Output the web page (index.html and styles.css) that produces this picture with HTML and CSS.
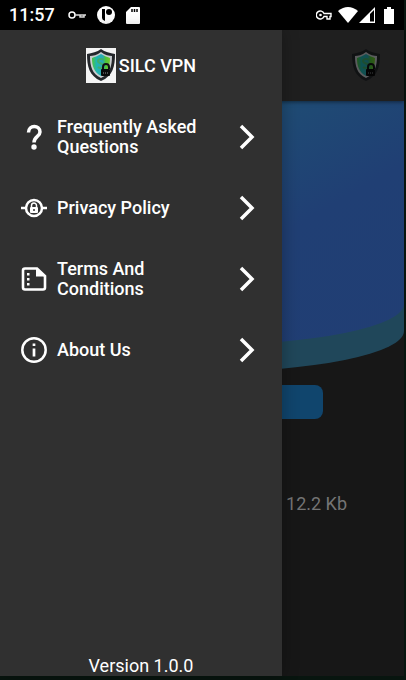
FILE: index.html
```html
<!DOCTYPE html>
<html lang="en">
<head>
<meta charset="utf-8">
<meta name="viewport" content="width=device-width, initial-scale=1">
<title>SILC VPN</title>
<link rel="stylesheet" href="styles.css">
</head>
<body>
<svg class="defs" aria-hidden="true">
  <defs>
    <linearGradient id="shield" x1="0" x2="1" y1="0" y2="0">
      <stop offset="0" stop-color="#4cc43a"/>
      <stop offset=".25" stop-color="#20b6b0"/>
      <stop offset=".6" stop-color="#2aa9b5"/>
      <stop offset=".75" stop-color="#4cc43a"/>
      <stop offset="1" stop-color="#74c62e"/>
    </linearGradient>
  </defs>
  <symbol id="logo" viewBox="0 0 30 35">
    <path d="M15 1C11 4 6 5 1 6C1 18 3 28 15 33C27 28 29 18 29 6C24 5 19 4 15 1Z" fill="#24272b"/>
    <path d="M15 4C11 7 7 8 4 8C4 18 6 26 15 30C24 26 26 18 26 8C23 8 19 7 15 4Z" fill="#c9cdd0"/>
    <path d="M15 6C12 8 8 9 6 10C6 18 8 24 15 28C22 24 24 18 24 10C22 9 18 8 15 6Z" fill="url(#shield)"/>
    <path d="M18 12C16 10 12 11 12 13C12 16 18 15 18 18C18 20 14 21 12 19" fill="none" stroke="#3fae6c" stroke-width="2"/>
    <path d="M17 21V19C17 15 23 15 23 19V21" fill="none" stroke="#101214" stroke-width="2"/>
    <rect x="15" y="21" width="9" height="7" rx="1" fill="#08090a"/>
    <path d="M17 25H22" stroke="#8b8f91" stroke-width="1" stroke-dasharray="1 1"/>
  </symbol>
  <symbol id="chevron" viewBox="0 0 16 26">
    <path d="M2 2L13 13L2 24" fill="none" stroke="currentColor" stroke-width="3.500"/>
  </symbol>
</svg>
<div class="screen">
  <header class="status">
    <div class="status-group">
      <time class="clock">11:57</time>
      <svg width="18" height="8" viewBox="0 0 18 8"><circle cx="4" cy="4" r="3" fill="none" stroke="#fff" stroke-width="1.5"/><path d="M7 4H18M12 4V6H16V4" fill="none" stroke="#ddd" stroke-width="1.5"/></svg>
      <svg width="18" height="18" viewBox="0 0 18 18"><circle cx="9" cy="9" r="9" fill="#fff"/><path d="M5 3H8V15Q5 14 5 12Z" fill="#000"/><circle cx="12" cy="6" r="3" fill="#000"/></svg>
      <svg width="14" height="17" viewBox="0 0 14 17"><path d="M5 0H13Q14 0 14 1V16Q14 17 13 17H1Q0 17 0 16V5Z" fill="#fff"/><path d="M6 2V5M8.500 2V5M11 2V5" stroke="#000" stroke-width="1.500"/></svg>
    </div>
    <div class="status-group status-right">
      <svg width="16" height="10" viewBox="0 0 16 10"><path d="M8 3.500H15V6.500H14V9H11V6.500H8A4 4 0 1 1 8 3.500Z" fill="none" stroke="#fff" stroke-width="1.400"/><circle cx="4.500" cy="5" r="1.300" fill="#fff"/></svg>
      <svg class="wifi" width="20" height="16" viewBox="0 0 20 16"><path d="M0 4Q10-4 20 4L10 16Z" fill="#fff"/></svg>
      <svg width="16" height="16" viewBox="0 0 16 16"><path d="M16 0V16H0Z" fill="#fff"/><path d="M11 7L15 3V14.500H11Z" fill="#000"/></svg>
      <svg class="battery" width="10" height="17" viewBox="0 0 10 17"><path d="M3 0H7V2H10V17H0V2H3Z" fill="#fff"/></svg>
    </div>
  </header>
  <div class="app">
    <main class="home">
      <div class="appbar"><svg class="logo logo-dim" role="img" aria-label="SILC VPN logo"><use href="#logo"/></svg></div>
      <div class="hero"><div class="hero-front"></div></div>
      <button class="connect" type="button" aria-label="Connect"></button>
      <p class="traffic"><span class="colon">:</span> 12.2 Kb</p>
    </main>
    <aside class="drawer">
      <h1 class="brand"><svg class="logo logo-tile" aria-hidden="true"><use href="#logo"/></svg>SILC VPN</h1>
      <nav class="menu">
        <a class="item" href="#faq">
          <svg class="icon" viewBox="0 0 26 26"><path d="M7.500 8.500C7.500 .5 19 .5 19 8C19 12.500 13 12.500 13 18.500" fill="none" stroke="currentColor" stroke-width="3.500"/><circle cx="13" cy="23" r="2.700" fill="currentColor"/></svg>
          <span class="label">Frequently Asked Questions</span>
          <svg class="chevron"><use href="#chevron"/></svg>
        </a>
        <a class="item" href="#privacy">
          <svg class="icon" viewBox="0 0 26 26"><circle cx="13" cy="13" r="8" fill="none" stroke="currentColor" stroke-width="2.500"/><path d="M0 13H5M21 13H26" stroke="currentColor" stroke-width="2.500"/><rect x="9" y="12" width="8" height="6" rx="1" fill="currentColor"/><path d="M10.500 12V10.500A2.500 2.500 0 0 1 15.500 10.500V12" fill="none" stroke="currentColor" stroke-width="1.500"/><circle cx="13" cy="15" r="1" fill="#303030"/></svg>
          <span class="label">Privacy Policy</span>
          <svg class="chevron"><use href="#chevron"/></svg>
        </a>
        <a class="item" href="#terms">
          <svg class="icon" viewBox="0 0 26 26"><path d="M16 2.500H4Q2 2.500 2 4.500V21.500Q2 23.500 4 23.500H22Q24 23.500 24 21.500V10Z" fill="none" stroke="currentColor" stroke-width="2.600"/><path d="M15 2L24.500 10.500H15Z" fill="currentColor"/><path d="M6 7H8.500V9.500H6ZM6 12H8.500V14.500H6ZM6 17H8.500V19.500H6Z" fill="currentColor"/></svg>
          <span class="label">Terms And Conditions</span>
          <svg class="chevron"><use href="#chevron"/></svg>
        </a>
        <a class="item" href="#about">
          <svg class="icon" viewBox="0 0 26 26"><circle cx="13" cy="13" r="11.700" fill="none" stroke="currentColor" stroke-width="2.500"/><path d="M13 11.500V19.500M13 6.500V9" stroke="currentColor" stroke-width="2.700"/></svg>
          <span class="label">About Us</span>
          <svg class="chevron"><use href="#chevron"/></svg>
        </a>
      </nav>
      <p class="version">Version 1.0.0</p>
    </aside>
  </div>
</div>
</body>
</html>
```
FILE: styles.css
```css
* {
  box-sizing: border-box;
}

body {
  margin: 0;
  background: #08150f;
  color: #fff;
  font-family: Roboto, "Liberation Sans", sans-serif;
  font-size: 18px;
  line-height: 20px;
}

h1,
p {
  margin: 0;
  font-size: inherit;
}

svg {
  display: block;
  flex: none;
}

.defs {
  position: absolute;
  width: 0;
  height: 0;
}

.screen {
  display: flex;
  flex-direction: column;
  min-height: 100vh;
  padding: 0 2px 4px 0;
}

.status {
  display: flex;
  justify-content: space-between;
  align-items: center;
  height: 30px;
  padding: 0 10px 0 9px;
  background: #000;
}

.status-group {
  display: flex;
  align-items: center;
  gap: 11px;
}

.status-right {
  gap: 1px;
}

.clock {
  margin-right: 2px;
  font-weight: 500;
}

.wifi {
  margin-left: 5px;
}

.battery {
  margin-left: 8px;
}

.app {
  position: relative;
  display: flex;
  flex: 1;
}

.home {
  display: flex;
  flex: 1;
  flex-direction: column;
  background: #171717;
}

.appbar {
  z-index: 1;
  display: flex;
  justify-content: flex-end;
  align-items: center;
  height: 71px;
  padding-right: 23px;
  background: #1f1f1f;
  box-shadow: 0 1px 4px rgba(0, 0, 0, 0.5);
}

.logo {
  width: 30px;
  height: 35px;
}

.logo-dim {
  filter: brightness(0.45);
}

.logo-tile {
  background: #f4f4f4;
}

.hero {
  height: 271px;
  padding-bottom: 27px;
  border-radius: 0 0 50% 50% / 0 0 41px 41px;
  background: #20475a;
}

.hero-front {
  height: 100%;
  border-radius: 0 0 50% 50% / 0 0 41px 41px;
  background: linear-gradient(150deg, #1d6a78 0%, #1f4a74 38%, #203f74 62%, #213e74 100%);
}

.connect {
  align-self: center;
  width: 60%;
  height: 34px;
  margin-top: 13px;
  border: 0;
  border-radius: 8px;
  background: #10456d;
}

.traffic {
  margin-top: 75px;
  padding-right: 57px;
  color: #747474;
  text-align: right;
}

.colon {
  color: #34345c;
}

.drawer {
  position: absolute;
  z-index: 2;
  inset: 0 auto 0 0;
  display: flex;
  flex-direction: column;
  width: 69.8%;
  background: #303030;
  box-shadow: 0 0 16px rgba(0, 0, 0, 0.3);
}

.brand {
  display: flex;
  justify-content: center;
  align-items: center;
  gap: 3px;
  height: 71px;
  font-weight: 500;
}

.item {
  display: flex;
  align-items: center;
  height: 71px;
  padding: 0 27px 0 21px;
  color: inherit;
  font-weight: 500;
  text-decoration: none;
}

.icon {
  width: 26px;
  height: 26px;
}

.label {
  flex: 1;
  padding: 0 32px 0 10px;
}

.chevron {
  width: 16px;
  height: 26px;
}

.version {
  margin-top: auto;
  text-align: center;
}
```
